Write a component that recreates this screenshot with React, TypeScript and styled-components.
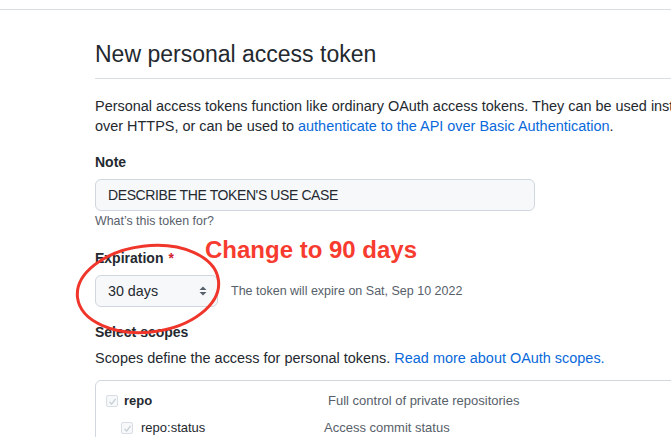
import React from "react"
import styled, { createGlobalStyle } from "styled-components"

const GlobalStyle = createGlobalStyle`
    body {
        margin: 0;
        background: #ffffff;
        color: #24292f;
        font-family: "Liberation Sans", Arial, sans-serif;
    }
`

const Page = styled.div`
    position: relative;
    width: 671px;
    height: 437px;
    overflow: hidden;
`

const TopBar = styled.div`
    height: 9px;
    border-bottom: 1px solid #d8dee4;
`

const Main = styled.main`
    padding: 29px 0 0 95px;
`

const Subhead = styled.div`
    padding-bottom: 9px;
    border-bottom: 1px solid #d8dee4;
`

const Title = styled.h2`
    margin: 0;
    font-size: 23px;
    line-height: 30px;
    font-weight: 400;
`

const Lead = styled.p`
    margin: 17px 0 0;
    font-size: 14.45px;
    line-height: 20px;
    white-space: nowrap;
`

const Link = styled.a`
    color: #0969da;
    text-decoration: none;
`

const Label = styled.div<{ $gap: number }>`
    margin-top: ${(p) => p.$gap}px;
    font-size: 14px;
    line-height: 20px;
    font-weight: 700;
`

const Required = styled.span`
    color: #cf222e;
    margin-left: 5px;
`

const NoteInput = styled.input`
    display: block;
    box-sizing: border-box;
    width: 440px;
    height: 32px;
    margin-top: 7px;
    padding: 0 12px;
    font-family: inherit;
    font-size: 14px;
    letter-spacing: -0.4px;
    color: #24292f;
    background: #f6f8fa;
    border: 1px solid #d0d7de;
    border-radius: 6px;
    outline: none;
`

const Help = styled.div`
    margin-top: 1px;
    font-size: 12.4px;
    line-height: 18px;
    color: #57606a;
`

const ExpiryRow = styled.div`
    display: flex;
    align-items: center;
    margin-top: 7px;
`

const Select = styled.div`
    box-sizing: border-box;
    display: flex;
    align-items: center;
    justify-content: space-between;
    width: 123px;
    height: 32px;
    padding: 0 10px 0 12px;
    font-size: 14.3px;
    background: #f6f8fa;
    border: 1px solid #d0d7de;
    border-radius: 6px;
`

const ExpiryNote = styled.span`
    margin-left: 13px;
    font-size: 12.5px;
    color: #57606a;
`

const Desc = styled.p`
    margin: 6px 0 0;
    font-size: 14.45px;
    line-height: 20px;
`

const ScopeBox = styled.div`
    width: 700px;
    margin-top: 12px;
    padding: 10px 0 0 10px;
    height: 80px;
    border: 1px solid #d0d7de;
    border-radius: 6px;
`

const ScopeRow = styled.div<{ $nested?: boolean }>`
    display: grid;
    grid-template-columns: ${(p) => (p.$nested ? "203px" : "222px")} 1fr;
    align-items: center;
    margin: ${(p) => (p.$nested ? "7px 0 0 15px" : "0")};
    font-size: 13px;
    line-height: 20px;
`

const ScopeName = styled.label<{ $bold?: boolean }>`
    display: flex;
    align-items: center;
    gap: ${(p) => (p.$bold ? "6px" : "8px")};
    font-weight: ${(p) => (p.$bold ? 700 : 400)};
`

const ScopeText = styled.span`
    color: #57606a;
`

const Check = styled.span`
    box-sizing: border-box;
    display: inline-flex;
    align-items: center;
    justify-content: center;
    width: 12px;
    height: 12px;
    border: 1px solid #d8dee4;
    border-radius: 2px;
    background: #f6f8fa;
`

const Annotation = styled.div`
    position: absolute;
    left: 205px;
    top: 236px;
    font-size: 24px;
    line-height: 28px;
    font-weight: 700;
    color: #f73b2f;
    white-space: nowrap;
`

const Circle = styled.svg`
    position: absolute;
    left: 64px;
    top: 235px;
`

const Tick = () => (
    <Check>
        <svg width="9" height="9" viewBox="0 0 9 9">
            <path d="M1.5 4.8 L3.6 7 L7.6 1.8" fill="none" stroke="#c4cbd2" strokeWidth="1.2" />
        </svg>
    </Check>
)

const Arrows = () => (
    <svg width="8" height="10" viewBox="0 0 8 10">
        <path d="M4 0.5 L7.5 4 L0.5 4 Z" fill="#57606a" />
        <path d="M0.5 6 L7.5 6 L4 9.5 Z" fill="#57606a" />
    </svg>
)

export default function App() {
    return (
        <Page>
            <GlobalStyle />
            <TopBar />
            <Main>
                <Subhead>
                    <Title>New personal access token</Title>
                </Subhead>
                <Lead>
                    Personal access tokens function like ordinary OAuth access tokens. They can be used instead of a
                    password for Git
                    <br />
                    over HTTPS, or can be used to{" "}
                    <Link href="#">authenticate to the API over Basic Authentication</Link>.
                </Lead>

                <Label $gap={16}>Note</Label>
                <NoteInput readOnly defaultValue="DESCRIBE THE TOKEN'S USE CASE" />
                <Help>What’s this token for?</Help>

                <Label $gap={18}>
                    Expiration<Required>*</Required>
                </Label>
                <ExpiryRow>
                    <Select>
                        30 days
                        <Arrows />
                    </Select>
                    <ExpiryNote>The token will expire on Sat, Sep 10 2022</ExpiryNote>
                </ExpiryRow>

                <Label $gap={15}>Select scopes</Label>
                <Desc>
                    Scopes define the access for personal tokens.{" "}
                    <Link href="#">Read more about OAuth scopes.</Link>
                </Desc>

                <ScopeBox>
                    <ScopeRow>
                        <ScopeName $bold>
                            <Tick />
                            repo
                        </ScopeName>
                        <ScopeText>Full control of private repositories</ScopeText>
                    </ScopeRow>
                    <ScopeRow $nested>
                        <ScopeName>
                            <Tick />
                            repo:status
                        </ScopeName>
                        <ScopeText>Access commit status</ScopeText>
                    </ScopeRow>
                </ScopeBox>
            </Main>

            <Annotation>Change to 90 days</Annotation>
            <Circle width="170" height="110" viewBox="0 0 170 110">
                <ellipse
                    cx="84"
                    cy="54"
                    rx="71"
                    ry="43"
                    transform="rotate(-7 84 54)"
                    fill="none"
                    stroke="#f0352a"
                    strokeWidth="3"
                />
            </Circle>
        </Page>
    )
}
